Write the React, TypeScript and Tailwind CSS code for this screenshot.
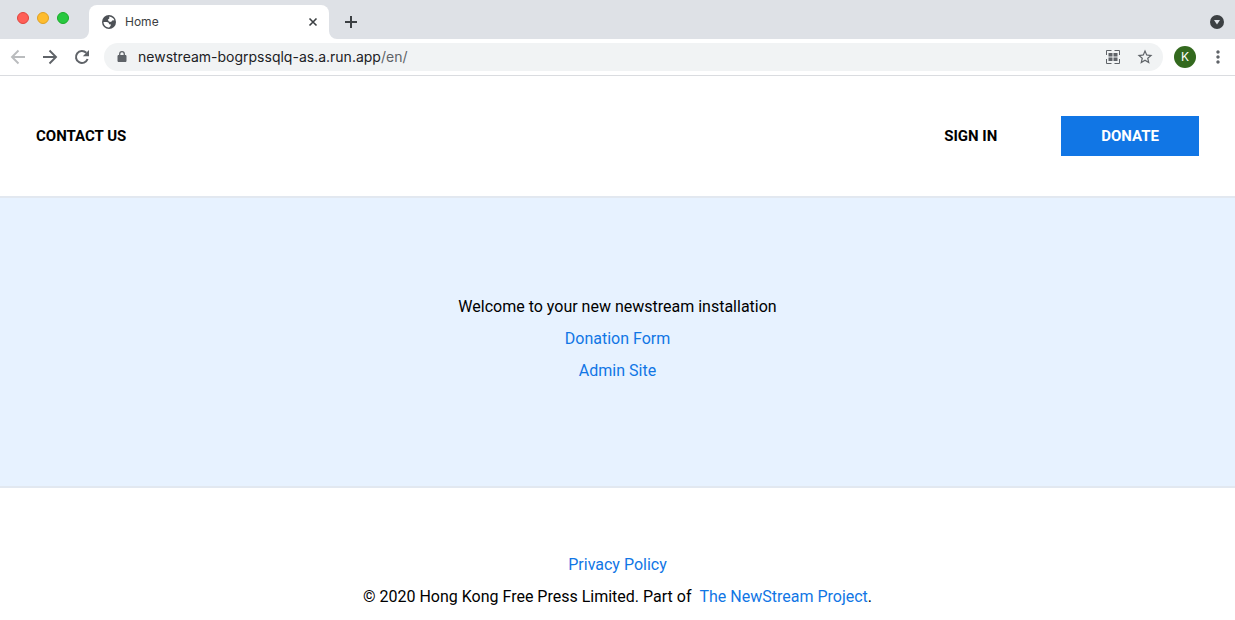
import { MdStarBorder, MdMoreVert } from "react-icons/md";

function TabStrip() {
  return (
    <div className="flex h-[39px] items-end bg-[#dee1e6]">
      <div className="mb-[15px] ml-[17px] flex w-[72px] gap-2">
        <button aria-label="Close window" className="size-3 rounded-full border border-[#e0443e] bg-[#ff5f57]" />
        <button aria-label="Minimize window" className="size-3 rounded-full border border-[#dea123] bg-[#febc2e]" />
        <button aria-label="Zoom window" className="size-3 rounded-full border border-[#1aab29] bg-[#28c840]" />
      </div>
      <div className="relative flex h-[34px] w-60 items-center rounded-t-lg bg-white pr-2 pl-3 text-[#3c4043]">
        <svg className="absolute bottom-0 -left-2 size-2" viewBox="0 0 8 8" aria-hidden="true">
          <path d="M8 0v8H0a8 8 0 0 0 8-8z" fill="#fff" />
        </svg>
        <svg className="absolute -right-2 bottom-0 size-2" viewBox="0 0 8 8" aria-hidden="true">
          <path d="M0 0v8h8a8 8 0 0 1-8-8z" fill="#fff" />
        </svg>
        <svg className="size-4" viewBox="0 0 16 16" aria-hidden="true">
          <circle cx="8" cy="8" r="7" fill="#4d5156" />
          <path d="M8.300 2.400C10.500 2.700 12.700 4 13.400 6.300L11.200 6.600L10.100 8.100L7.900 7.500L6.800 5.700L8.300 4.600z" fill="#fff" />
          <path d="M2.500 8H5.600C7.400 8.200 8.300 9 8 10.300H9.700V11.800L8.200 13.500C5.200 13.500 2.600 11.300 2.500 8z" fill="#fff" />
        </svg>
        <span className="ml-2 flex-1 text-[12px]">Home</span>
        <button aria-label="Close tab" className="grid size-4 place-items-center">
          <svg className="size-4" viewBox="0 0 16 16" stroke="currentColor" strokeWidth="1.600">
            <path d="M4.500 4.500l7 7M11.500 4.500l-7 7" />
          </svg>
        </button>
      </div>
      <button aria-label="New tab" className="mb-[7px] ml-3 text-[#3c4043]">
        <svg className="size-5" viewBox="0 0 20 20" stroke="currentColor" strokeWidth="2">
          <path d="M10 4v12M4 10h12" />
        </svg>
      </button>
      <button aria-label="Search tabs" className="mr-[11px] mb-[10px] ml-auto">
        <svg className="size-[14px]" viewBox="0 0 14 14">
          <circle cx="7" cy="7" r="7" fill="#3c4043" />
          <path d="M4 5h6L7 9.500z" fill="#dee1e6" />
        </svg>
      </button>
    </div>
  );
}

function Toolbar() {
  return (
    <div className="flex h-[37px] items-center border-b border-[#dadce0] bg-white pr-[7px] pl-2 text-[#5f6368]">
      <button aria-label="Back" className="mr-3 text-[#babcbe]">
        <svg className="size-5" viewBox="0 0 20 20" fill="none" stroke="currentColor" strokeWidth="1.900">
          <path d="M17 10H4M10.500 3.500L4 10l6.500 6.500" />
        </svg>
      </button>
      <button aria-label="Forward" className="mr-3">
        <svg className="size-5" viewBox="0 0 20 20" fill="none" stroke="currentColor" strokeWidth="1.900">
          <path d="M3 10h13M9.500 3.500L16 10l-6.500 6.500" />
        </svg>
      </button>
      <button aria-label="Reload" className="mr-3">
        <svg className="size-5" viewBox="0 0 20 20" fill="none" stroke="currentColor" strokeWidth="2">
          <path d="M15.600 12A6 6 0 1 1 14.300 5.800" />
          <path d="M17 3v6.200h-6.200z" fill="currentColor" stroke="none" />
        </svg>
      </button>
      <div className="flex h-7 flex-1 items-center rounded-full bg-[#f1f3f4] pr-[9px] pl-3">
        <svg className="mr-[10px] size-3" viewBox="0 0 12 12" fill="none" stroke="currentColor" aria-hidden="true">
          <path d="M2 4.500h8v6H2z" fill="currentColor" />
          <path d="M3.700 4.500V3a2.300 2.300 0 0 1 4.600 0v1.500" strokeWidth="1.300" />
        </svg>
        <a href="#address" className="flex-1 text-[14px] leading-5 text-[#5f6368]">
          <span className="text-[#202124]">newstream-bogrpssqlq-as.a.run.app</span>/en/
        </a>
        <button aria-label="QR code" className="mr-[15px]">
          <svg className="size-4" viewBox="0 0 16 16" fill="none" stroke="currentColor">
            <path d="M1.500 6V1.500H6.500M9.500 1.500h5V6M14.500 10v4.500H9.500M6.500 14.500H1.500V10" />
            <path d="M3.500 4h4v3.500h-4zM8.500 4h4v3.500h-4zM3.500 8.500h4V12h-4zM8.500 8.500h4V12h-4z" fill="currentColor" stroke="none" />
          </svg>
        </button>
        <button aria-label="Bookmark this page">
          <MdStarBorder className="size-[18px]" />
        </button>
      </div>
      <button aria-label="Profile" className="ml-[11px] size-[22px] rounded-full bg-[#33691e] text-[12px] text-white">K</button>
      <button aria-label="Menu" className="ml-3">
        <MdMoreVert className="size-5" />
      </button>
    </div>
  );
}

export default function App() {
  return (
    <div className="flex min-h-screen flex-col bg-white font-['Roboto',sans-serif]">
      <div className="font-['Inter',sans-serif]">
        <TabStrip />
        <Toolbar />
      </div>
      <header className="flex h-[120px] items-center px-9 text-[15px] font-bold text-black">
        <a href="#contact">CONTACT US</a>
        <a href="#signin" className="mr-16 ml-auto">SIGN IN</a>
        <a href="#donate" className="flex h-10 items-center bg-[#1176e5] px-10 text-white">DONATE</a>
      </header>
      <main className="border-y-2 border-[#e2e8f0] bg-[#e7f2ff] pt-[93px] pb-[99px] text-center text-[16px] leading-8 text-black">
        <p>Welcome to your new newstream installation</p>
        <p>
          <a href="#donation-form" className="text-[#1176e5]">Donation Form</a>
        </p>
        <p>
          <a href="#admin" className="text-[#1176e5]">Admin Site</a>
        </p>
      </main>
      <footer className="pt-[61px] text-center text-[16px] leading-8 text-black">
        <p>
          <a href="#privacy" className="text-[#1176e5]">Privacy Policy</a>
        </p>
        <p>
          © 2020 Hong Kong Free Press Limited. Part of
          <a href="#project" className="ml-2 text-[#1176e5]">The NewStream Project</a>.
        </p>
      </footer>
    </div>
  );
}
